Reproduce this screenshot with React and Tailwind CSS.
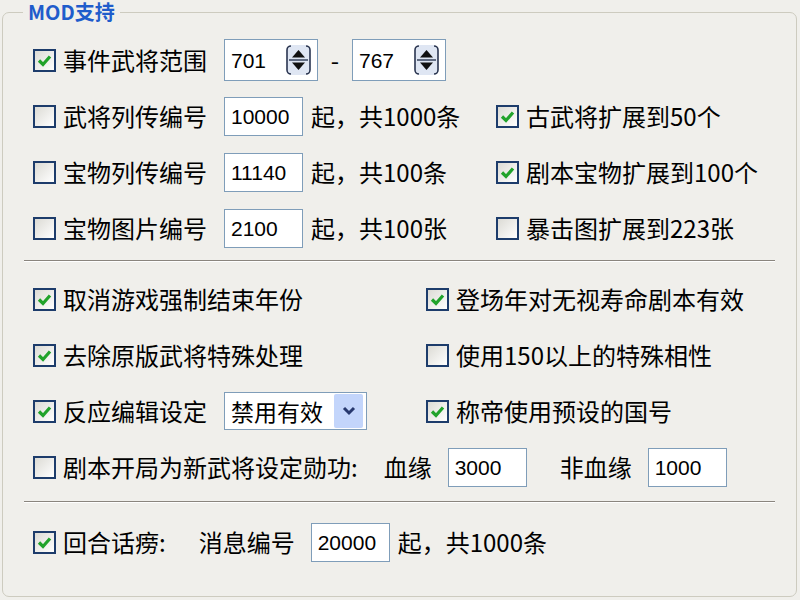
import React from "react";

const FONT = { fontFamily: '"Noto Sans CJK SC", "Noto Sans", sans-serif' };

// XP風チェックボックス
const Check = ({ checked }) => (
  <span className="w-[23px] h-[23px] shrink-0 border-2 border-[#1d3c6b] bg-linear-to-br from-[#dcdbd5] to-white flex items-center justify-center">
    {checked && (
      <svg width="15" height="15" viewBox="0 0 15 15">
        <path d="M2 7.5 L6 11.5 L13 3.5" stroke="#21a32b" strokeWidth="3.2" fill="none" />
      </svg>
    )}
  </span>
);

const Box = ({ value, w = "w-[79px]", h = "h-[39px]", children }) => (
  <div className={`${w} ${h} shrink-0 border border-[#7f9db9] bg-white flex items-center pl-[6px] pr-[6px] justify-between`}>
    <span className="text-[21px] text-black" style={{ fontFamily: '"Liberation Sans", Arial, sans-serif' }}>
      {value}
    </span>
    {children}
  </div>
);

const Spin = () => (
  <svg width="25" height="30" viewBox="0 0 25 30">
    <rect x="1" y="1" width="23" height="28" rx="4" fill="#dfe6f3" stroke="#2a3550" strokeWidth="1.6" />
    <rect x="5" y="-1" width="15" height="3" fill="#dfe6f3" />
    <rect x="5" y="28" width="15" height="3" fill="#dfe6f3" />
    <line x1="3" y1="15" x2="22" y2="15" stroke="#2a3550" strokeWidth="1.4" />
    <path d="M12.5 5 L19 12.5 L6 12.5 Z" fill="#111" />
    <path d="M12.5 25 L19 17.5 L6 17.5 Z" fill="#111" />
  </svg>
);

const Row = ({ children }) => <div className="h-[56px] flex items-center">{children}</div>;

const Item = ({ checked, label }) => (
  <div className="flex items-center gap-[7px]">
    <Check checked={checked} />
    <span>{label}</span>
  </div>
);

const Sep = ({ cls }) => <div className={`border-t border-[#8a857e] border-b border-b-white ${cls}`} />;

export default function App() {
  return (
    <div className="w-[800px] h-[600px] bg-[#f0efeb] pl-[2px] pr-[3px] overflow-hidden text-[24px] text-black leading-none" style={FONT}>
      <fieldset className="h-[597px] border border-[#cdcbbf] rounded-[7px] px-[28px]">
        <legend className="-ml-[8px] px-[5px] text-[20px] leading-[24px] font-bold text-[#1f5ccb]">MOD支持</legend>
        <div className="pt-[8px] -mx-[28px] px-[30px]">
          <Row>
            <div className="flex items-center">
              <div className="w-[191px] shrink-0"><Item checked label="事件武将范围" /></div>
              <Box value="701" w="w-[94px]" h="h-[42px]"><Spin /></Box>
              <span className="w-[34px] text-center">-</span>
              <Box value="767" w="w-[94px]" h="h-[42px]"><Spin /></Box>
            </div>
          </Row>
          {[
            ["武将列传编号", "10000", "起，共1000条", true, "古武将扩展到50个"],
            ["宝物列传编号", "11140", "起，共100条", true, "剧本宝物扩展到100个"],
            ["宝物图片编号", "2100", "起，共100张", false, "暴击图扩展到223张"],
          ].map(([l, v, t, rc, r]) => (
            <Row key={l}>
              <div className="w-[463px] shrink-0 flex items-center">
                <div className="w-[191px] shrink-0"><Item label={l} /></div>
                <Box value={v} />
                <span className="ml-[8px]">{t}</span>
              </div>
              <Item checked={rc} label={r} />
            </Row>
          ))}
        </div>
        <Sep cls="-mx-[7px] mt-[4px] mb-[9px]" />
        <div className="-mx-[28px] px-[30px]">
          <Row>
            <div className="w-[393px] shrink-0"><Item checked label="取消游戏强制结束年份" /></div>
            <Item checked label="登场年对无视寿命剧本有效" />
          </Row>
          <Row>
            <div className="w-[393px] shrink-0"><Item checked label="去除原版武将特殊处理" /></div>
            <Item label="使用150以上的特殊相性" />
          </Row>
          <Row>
            <div className="w-[393px] shrink-0 flex items-center">
              <div className="w-[191px] shrink-0"><Item checked label="反应编辑设定" /></div>
              <div className="w-[143px] h-[38px] border border-[#7f9db9] bg-white flex items-center justify-between pl-[6px] pr-[3px]">
                <span className="text-[23px]">禁用有效</span>
                <span className="w-[29px] h-[34px] bg-[#c3d5fb] rounded-[2px] flex items-center justify-center">
                  <svg width="14" height="10" viewBox="0 0 14 10">
                    <path d="M2 2 L7 7 L12 2" stroke="#27386e" strokeWidth="3" fill="none" />
                  </svg>
                </span>
              </div>
            </div>
            <Item checked label="称帝使用预设的国号" />
          </Row>
          <Row>
            <Item label="剧本开局为新武将设定勋功:" />
            <span className="ml-[26px] w-[64px]">血缘</span>
            <Box value="3000" />
            <span className="ml-[33px] w-[88px]">非血缘</span>
            <Box value="1000" />
          </Row>
        </div>
        <Sep cls="-mx-[7px] mt-[6px] mb-[11px]" />
        <div className="-mx-[28px] px-[30px]">
          <Row>
            <Item checked label="回合话痨:" />
            <span className="ml-[33px] w-[112px]">消息编号</span>
            <Box value="20000" />
            <span className="ml-[8px]">起，共1000条</span>
          </Row>
        </div>
      </fieldset>
    </div>
  );
}
